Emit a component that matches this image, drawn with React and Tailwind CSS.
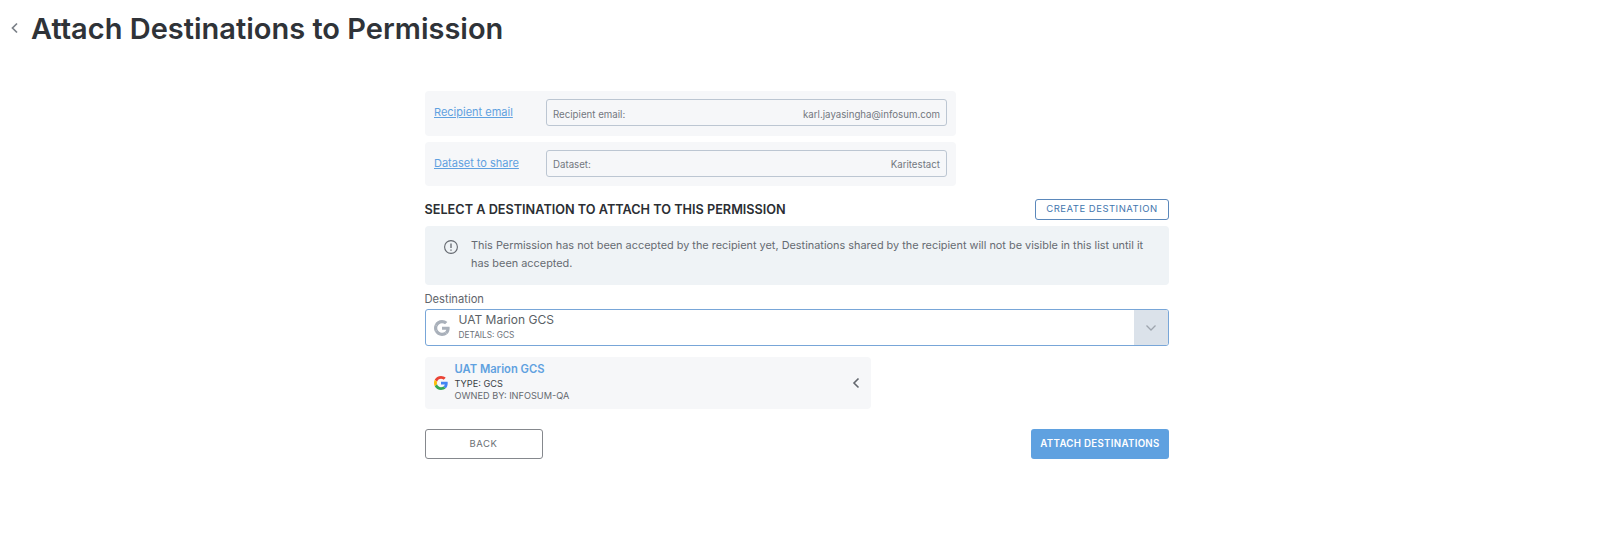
import React from "react";

function GoogleG({ gray = false, size = 14 }) {
  const c = (x) => (gray ? "#a9b0ba" : x);
  return (
    <svg width={size} height={size} viewBox="0 0 48 48" className="shrink-0">
      <path fill={c("#EA4335")} d="M24 9.5c3.5 0 6.7 1.2 9.2 3.6l6.9-6.9C35.9 2.4 30.5 0 24 0 14.6 0 6.5 5.4 2.6 13.2l8 6.2C12.5 13.7 17.8 9.5 24 9.5z" />
      <path fill={c("#4285F4")} d="M46.98 24.55c0-1.57-.15-3.09-.38-4.55H24v9.02h12.94c-.58 2.96-2.26 5.48-4.78 7.18l7.73 6c4.51-4.18 7.09-10.36 7.09-17.65z" />
      <path fill={c("#FBBC05")} d="M10.53 28.59c-.48-1.45-.76-2.99-.76-4.59s.27-3.14.76-4.59l-7.98-6.19C.92 16.46 0 20.12 0 24c0 3.88.92 7.54 2.56 10.78l7.97-6.19z" />
      <path fill={c("#34A853")} d="M24 48c6.48 0 11.93-2.13 15.89-5.81l-7.73-6c-2.15 1.45-4.92 2.3-8.16 2.3-6.26 0-11.57-4.22-13.47-9.91l-7.98 6.19C6.51 42.62 14.62 48 24 48z" />
    </svg>
  );
}

function InfoRow({ link, label, value, className }) {
  return (
    <div className={`flex w-[531.5px] items-center rounded bg-[#f6f7f9] pl-[9.5px] pr-[9px] ${className}`}>
      <a className="w-[112px] -translate-y-[1px] text-[11px] text-[#5fa1e0] underline">{link}</a>
      <div className="flex h-[27px] flex-1 -translate-y-[1px] items-center justify-between rounded-[3px] border border-[#bcc6d2] bg-[#f6f7f9] px-[6px] pt-[5px] text-[9.7px] text-[#73787f]">
        <span>{label}</span>
        <span>{value}</span>
      </div>
    </div>
  );
}

export default function App() {
  return (
    <div className="h-[549px] bg-white font-['Inter','Liberation_Sans',sans-serif] text-[#33373d]">
      <header className="flex items-center pl-[10px] pt-[11px]">
        <svg width="10" height="14" viewBox="0 0 10 14" fill="none" stroke="#7b8088" strokeWidth="1.7" className="-translate-y-[1px]">
          <path d="M7 2.5 L2.5 7 L7 11.5" />
        </svg>
        <h1 className="ml-[11px] text-[29px] leading-[36px] font-semibold text-[#2f3338]">Attach Destinations to Permission</h1>
      </header>

      <main className="ml-[424.5px] mt-[44px] w-[744.5px]">
        <InfoRow link="Recipient email" label="Recipient email:" value="karl.jayasingha@infosum.com" className="h-[45px]" />
        <InfoRow link="Dataset to share" label="Dataset:" value="Karitestact" className="mt-[6px] h-[44px]" />

        <div className="mt-[13px] flex h-[21px] items-center justify-between">
          <h2 className="text-[12.7px] font-semibold text-[#2b2e33]">SELECT A DESTINATION TO ATTACH TO THIS PERMISSION</h2>
          <button className="h-[21px] w-[134px] rounded-[3px] border border-[#5b88bb] text-[9.5px] tracking-[0.5px] text-[#3f76ae]">CREATE DESTINATION</button>
        </div>

        <div className="mt-[6px] flex h-[59px] rounded bg-[#eff3f6] pl-[18.5px] pr-[14px] pt-[10px]">
          <svg width="16" height="16" viewBox="0 0 16 16" fill="none" stroke="#63676e" strokeWidth="1.1" className="mt-[3px] shrink-0">
            <circle cx="8" cy="8" r="6.4" />
            <path d="M8 4.4v4.6M8 10.6v1.1" strokeWidth="1.3" />
          </svg>
          <p className="ml-[12px] text-[10.9px] leading-[18px] text-[#666b72]">
            This Permission has not been accepted by the recipient yet, Destinations shared by the recipient will not be visible in this list until it has been accepted.
          </p>
        </div>

        <label className="mt-[6px] block text-[11.2px] leading-[16px] text-[#5f646b]">Destination</label>

        <div className="mt-[2px] flex h-[37px] overflow-hidden rounded-[3px] border border-[#78a6d8]">
          <div className="flex flex-1 items-center pl-[8px]">
            <GoogleG gray size={16} />
            <div className="ml-[9px] -translate-y-[1px]">
              <div className="text-[12px] leading-[15px] text-[#5a5f66]">UAT Marion GCS</div>
              <div className="mt-[3px] text-[8.3px] leading-[11px] text-[#6b7078]">DETAILS: GCS</div>
            </div>
          </div>
          <div className="flex w-[34px] items-center justify-center bg-[#dbe2ea]">
            <svg width="12" height="8" viewBox="0 0 12 8" fill="none" stroke="#9ea5ae" strokeWidth="1.3">
              <path d="M1.5 1.5 L6 6 L10.5 1.5" />
            </svg>
          </div>
        </div>

        <div className="mt-[11px] flex h-[52px] w-[446px] items-center rounded bg-[#f6f7f9] pl-[9px] pr-[10px]">
          <GoogleG size={14} />
          <div className="ml-[7px] -translate-y-[1px]">
            <div className="text-[11.2px] leading-[15px] font-semibold text-[#5fa1e0]">UAT Marion GCS</div>
            <div className="mt-[1px] text-[9.2px] leading-[12px] text-[#3b3f45]">TYPE: GCS</div>
            <div className="text-[9.2px] leading-[12px] text-[#65696f]">OWNED BY: INFOSUM-QA</div>
          </div>
          <svg width="10" height="12" viewBox="0 0 10 12" fill="none" stroke="#63676e" strokeWidth="1.6" className="ml-auto">
            <path d="M7.5 1.5 L3 6 L7.5 10.5" />
          </svg>
        </div>

        <div className="mt-[20px] flex justify-between">
          <button className="h-[30px] w-[118px] rounded-[3px] border border-[#85888d] bg-white text-[9.5px] tracking-[0.5px] text-[#6b6f75]">BACK</button>
          <button className="h-[30px] w-[138px] rounded-[3px] bg-[#5fa1e0] text-[9.7px] font-semibold tracking-[0.3px] text-white">ATTACH DESTINATIONS</button>
        </div>
      </main>
    </div>
  );
}
